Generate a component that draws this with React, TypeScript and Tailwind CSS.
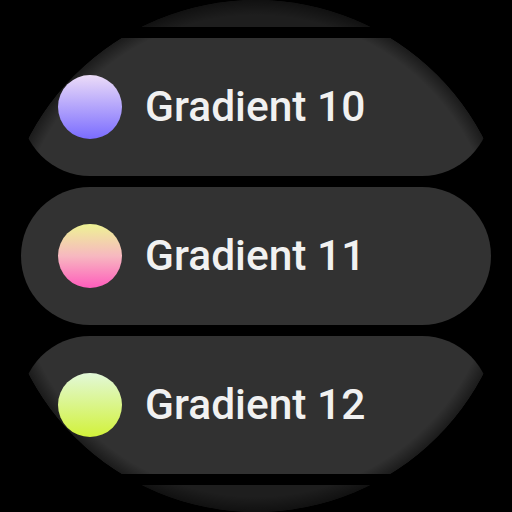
import React from "react";

type Item = { label?: string; from: string; via?: string; to: string; tone: string };

const items: Item[] = [
  { from: "#f2d9f0", to: "#9a7cf0", tone: "bg-[#1e1e1e]" },
  { label: "Gradient 10", from: "#ecdcf8", to: "#7a6cff", tone: "bg-[#313131]" },
  { label: "Gradient 11", from: "#eef394", via: "#f7b8c0", to: "#ff5cbc", tone: "bg-[#323232]" },
  { label: "Gradient 12", from: "#e2f8d8", to: "#d2f23a", tone: "bg-[#313131]" },
  { from: "#d8f0f8", to: "#40c8f0", tone: "bg-[#1e1e1e]" },
];

function Swatch({ from, via, to }: { from: string; via?: string; to: string }) {
  const bg = via
    ? `linear-gradient(to bottom, ${from}, ${via}, ${to})`
    : `linear-gradient(to bottom, ${from}, ${to})`;
  return (
    <div className="relative z-20 h-[64px] w-[64px] shrink-0 rounded-full" style={{ background: bg }} />
  );
}

function Chip({ item }: { item: Item }) {
  return (
    <div
      className={`mx-[21px] flex h-[138px] shrink-0 items-center gap-[23px] rounded-full pl-[37px] ${item.tone}`}
    >
      {item.label && (
        <>
          <Swatch from={item.from} via={item.via} to={item.to} />
          <span
            className="relative z-20 text-[42.5px] font-medium leading-none text-[#f1f1f1]"
            style={{ fontFamily: "Roboto, 'Noto Sans', sans-serif" }}
          >
            {item.label}
          </span>
        </>
      )}
    </div>
  );
}

export default function App() {
  return (
    <div className="h-[512px] w-[512px] bg-black">
      <div className="relative h-[512px] w-[512px] overflow-hidden rounded-full bg-black">
        <div className="-mt-[111px] flex flex-col gap-[11px]">
          {items.map((it, i) => (
            <Chip key={i} item={it} />
          ))}
        </div>
        {/* soft fade of the chip surfaces towards the round rim */}
        <div className="pointer-events-none absolute inset-0 z-10 rounded-full bg-[radial-gradient(circle_closest-side,transparent_94%,rgba(0,0,0,0.45)_100%)]" />
      </div>
    </div>
  );
}
